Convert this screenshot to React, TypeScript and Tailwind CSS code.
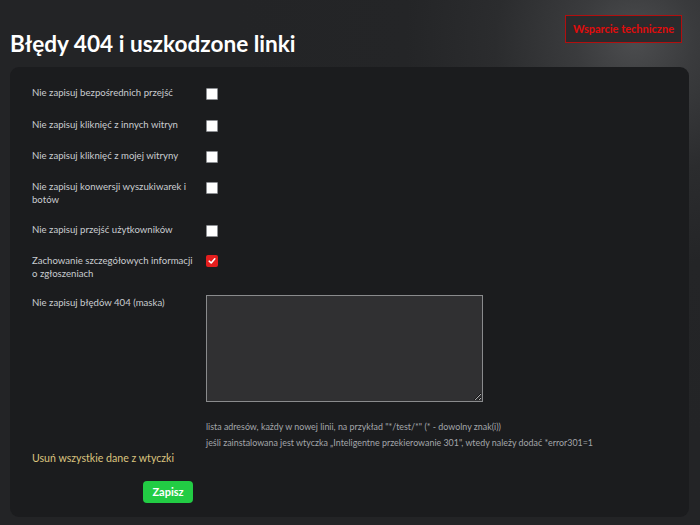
import React from "react";

const rows: { label: string; checked?: boolean; mb: string }[] = [
  { label: "Nie zapisuj bezpośrednich przejść", mb: "mb-[18px]" },
  { label: "Nie zapisuj kliknięć z innych witryn", mb: "mb-[17px]" },
  { label: "Nie zapisuj kliknięć z mojej witryny", mb: "mb-[17px]" },
  { label: "Nie zapisuj konwersji wyszukiwarek i botów", mb: "mb-[17px]" },
  { label: "Nie zapisuj przejść użytkowników", mb: "mb-[17px]" },
  { label: "Zachowanie szczegółowych informacji o zgłoszeniach", checked: true, mb: "mb-[15px]" },
];

function Checkbox({ checked }: { checked?: boolean }) {
  if (checked) {
    return (
      <div className="mt-[1px] flex h-[12px] w-[12px] shrink-0 items-center justify-center rounded-[2px] bg-[#e41e1e]">
        <svg width="8" height="8" viewBox="0 0 8 8">
          <path d="M1.2 4.2 L3.2 6 L6.8 1.8" fill="none" stroke="#ffffff" strokeWidth="1.6" strokeLinecap="round" strokeLinejoin="round" />
        </svg>
      </div>
    );
  }
  return <div className="mt-[2px] h-[12px] w-[12px] shrink-0 rounded-[1px] border border-[#8d8f93] bg-white" />;
}

export default function App() {
  return (
    <div
      className="min-h-[525px] w-full bg-[#232426] bg-[radial-gradient(circle_at_635px_40px,#4c4d4f_0px,#3a3b3d_60px,#2b2c2e_140px,#242527_230px,#232426_400px)] pb-[8px] text-[#c9ccd0]"
      style={{ fontFamily: 'Lato, "Noto Sans", sans-serif' }}
    >
      <div className="flex h-[67px] items-start justify-between pl-[10px] pr-[18px]">
        <h1 className="mt-[29px] text-[22.6px] font-bold leading-[30px] text-white">Błędy 404 i uszkodzone linki</h1>
        <button className="mt-[15px] h-[28px] border border-[#b20f0f] bg-[#2a2b2d] px-[7px] text-[11px] font-bold text-[#e00c0c]">
          Wsparcie techniczne
        </button>
      </div>
      <div className="ml-[10px] mr-[11px] h-[450px] rounded-[9px] bg-[#1b1c1e] pl-[22px] pt-[19px]">
        {rows.map((r) => (
          <div key={r.label} className={`flex items-start ${r.mb}`}>
            <div className="w-[174px] pr-[12px] text-[9.6px] leading-[13px] text-[#c9ccd0]">{r.label}</div>
            <Checkbox checked={r.checked} />
          </div>
        ))}
        <div className="flex items-start">
          <div className="w-[174px] pt-[1px] text-[9.6px] leading-[13px] text-[#c9ccd0]">Nie zapisuj błędów 404 (maska)</div>
          <div className="flex flex-col">
            <textarea className="h-[107px] w-[277px] resize border border-[#8a8b8d] bg-[#303032] outline-none" />
            <div className="mt-[17px] text-[8.9px] leading-[16px] text-[#a3a6aa]">
              <div>lista adresów, każdy w nowej linii, na przykład "*/test/*" (* - dowolny znak(i))</div>
              <div>jeśli zainstalowana jest wtyczka „Inteligentne przekierowanie 301", wtedy należy dodać *error301=1</div>
            </div>
          </div>
        </div>
        <div className="text-[10.6px] leading-[15px] text-[#dcc47f]">Usuń wszystkie dane z wtyczki</div>
        <div className="mt-[15px] flex pl-[111px]">
          <button className="h-[22px] w-[50px] rounded-[4px] bg-[#22cc44] text-[11px] font-bold leading-[22px] text-white">Zapisz</button>
        </div>
      </div>
    </div>
  );
}
